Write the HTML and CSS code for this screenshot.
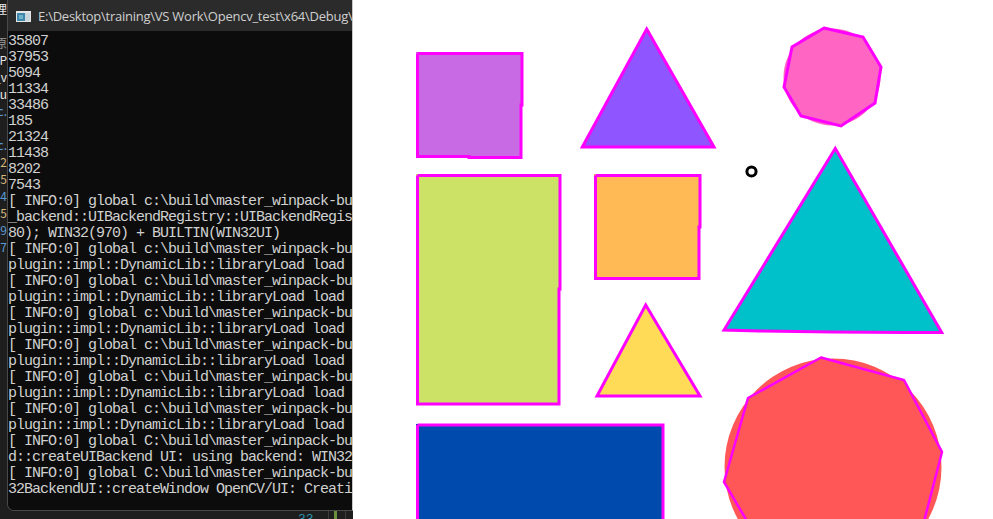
FILE: index.html
```html
<!DOCTYPE html>
<html lang="en">
<head>
<meta charset="utf-8">
<title>OpenCV shapes</title>
<link rel="stylesheet" href="styles.css">
</head>
<body>
<div class="screen">
  <div class="desk">
    <div class="desk-top">
      <pre class="editor-strip"><span class="w">理</span>

<span class="g">原</span>
<span class="w">PP</span>
<span class="w">v_</span>
<span class="w">u</span>
<span class="b">.c</span>

<span class="b">.c</span>
<span class="o">2.</span>
<span class="o">5.c</span>
<span class="b">4.c</span>
<span class="o">5.c</span>
<span class="b">9.c</span>
<span class="b">7.c</span></pre>
      <div class="console">
        <div class="titlebar">
          <svg class="app-icon" width="15" height="11" viewBox="0 0 15 11">
            <rect x="0" y="0" width="15" height="11" fill="#e6e6e6"/>
            <rect x="1" y="2" width="8" height="8" fill="#3f86ad"/>
            <rect x="3" y="4" width="4" height="4" fill="#6fb3c9"/>
            <rect x="9" y="2" width="5" height="8" fill="#c9d6dc"/>
          </svg>
          <span class="title">E:\Desktop\training\VS Work\Opencv_test\x64\Debug\Opencv_test.exe</span>
        </div>
        <pre class="console-body">35807
37953
5094
11334
33486
185
21324
11438
8202
7543
[ INFO:0] global c:\build\master_winpack-build-win64-vc15\opencv\modules\highgui\src\registry.impl.hpp
_backend::UIBackendRegistry::UIBackendRegistry UI: Enabled backends(3, sorted by priority): GTK(1000)
80); WIN32(970) + BUILTIN(WIN32UI)
[ INFO:0] global c:\build\master_winpack-build-win64-vc15\opencv\modules\core\src\utils\plugin_loader
plugin::impl::DynamicLib::libraryLoad load libopencv_highgui_gtk.dll =&gt; FAILED
[ INFO:0] global c:\build\master_winpack-build-win64-vc15\opencv\modules\core\src\utils\plugin_loader
plugin::impl::DynamicLib::libraryLoad load opencv_highgui_gtk.dll =&gt; FAILED
[ INFO:0] global c:\build\master_winpack-build-win64-vc15\opencv\modules\core\src\utils\plugin_loader
plugin::impl::DynamicLib::libraryLoad load libopencv_highgui_gtk3.dll =&gt; FAILED
[ INFO:0] global c:\build\master_winpack-build-win64-vc15\opencv\modules\core\src\utils\plugin_loader
plugin::impl::DynamicLib::libraryLoad load opencv_highgui_gtk3.dll =&gt; FAILED
[ INFO:0] global c:\build\master_winpack-build-win64-vc15\opencv\modules\core\src\utils\plugin_loader
plugin::impl::DynamicLib::libraryLoad load libopencv_highgui_gtk2.dll =&gt; FAILED
[ INFO:0] global c:\build\master_winpack-build-win64-vc15\opencv\modules\core\src\utils\plugin_loader
plugin::impl::DynamicLib::libraryLoad load opencv_highgui_gtk2.dll =&gt; FAILED
[ INFO:0] global C:\build\master_winpack-build-win64-vc15\opencv\modules\highgui\src\backend.cpp (90)
d::createUIBackend UI: using backend: WIN32 (priority=970)
[ INFO:0] global C:\build\master_winpack-build-win64-vc15\opencv\modules\highgui\src\window_w32.cpp
32BackendUI::createWindow OpenCV/UI: Creating Win32UI window: 1 (1)</pre>
      </div>
    </div>
    <div class="desk-bottom">
      <span class="ln">33</span>
      <span class="vline"></span>
      <span class="gbar"></span>
      <span class="vline2"></span>
    </div>
  </div>
  <div class="canvas">
    <svg width="640" height="519" viewBox="353 0 640 519">
      <g class="outline">
        <!-- purple square -->
        <rect x="416" y="52" width="106" height="106" fill="#c86ae4" stroke="none"/>
        <polyline points="417.5,53.5 522,53.5 522,105 521,105 521,157.5 469,157.5 469,156.5 417.5,156.5 417.5,53.5"/>
        <!-- violet triangle -->
        <polygon points="646.7,29 714,147 582.3,147" fill="#8f55ff"/>
        <!-- pink octagon -->
        <circle cx="832" cy="77" r="48.5" fill="#ff66c4" stroke="none"/>
        <polygon points="824,28 863,37 881,67 875,103 841,126 801,116 784,87 792,47" fill="#ff66c4"/>
        <!-- green rect -->
        <rect x="416" y="174" width="144" height="231" fill="#cbe266" stroke="none"/>
        <polyline points="417.5,175.5 560,175.5 560,289 559,289 559,404 417.5,404 417.5,175.5"/>
        <!-- orange square -->
        <rect x="594" y="174" width="106" height="106" fill="#ffba55" stroke="none"/>
        <polyline points="595.5,175.5 700,175.5 700,227 699,227 699,278.5 595.5,278.5 595.5,175.5"/>
        <!-- yellow triangle -->
        <polygon points="645.7,305 700,396 597,396" fill="#ffdb58"/>
        <!-- cyan triangle -->
        <polygon points="835.3,148.5 941.7,332.5 906,332.5 833,332 760,331 724,330" fill="#00c0ca"/>
        <!-- blue rect -->
        <rect x="416" y="424" width="247" height="110" fill="#004aad" stroke="none"/>
        <polyline points="417.5,425 663,425 663,540 417.5,540 417.5,425"/>
        <!-- red octagon -->
        <circle cx="833" cy="467" r="108.5" fill="#ff5757" stroke="none"/>
        <polygon class="thin" points="821,357.5 904,380 942,452 921,533 848,576 767,555 724,482 748,398" fill="#ff5757"/>
      </g>
      <circle cx="751.5" cy="171.5" r="4.6" fill="#fff" stroke="#000" stroke-width="3"/>
    </svg>
  </div>
</div>
</body>
</html>
```

FILE: styles.css
```css
html, body {
  margin: 0;
  padding: 0;
  background: #1e1e1e;
}

.screen {
  display: flex;
  width: 993px;
  height: 519px;
  overflow: hidden;
}

.desk {
  width: 353px;
  flex: none;
  display: flex;
  flex-direction: column;
  background: #1e1e1e;
}

.desk-top {
  display: flex;
  height: 511px;
}

.editor-strip {
  width: 7px;
  margin: 0;
  padding-top: 0;
  overflow: hidden;
  font-family: "Noto Sans CJK SC", "Liberation Mono", monospace;
  font-size: 12px;
  line-height: 17px;
  direction: rtl;
  text-align: left;
  color: #bbbbbb;
  background: #1e1e1e;
}

.editor-strip .w { color: #e6e6e6; }
.editor-strip .g { color: #9a9a9a; }
.editor-strip .b { color: #5b9bd5; }
.editor-strip .o { color: #d7ba7d; }

.console {
  width: 344px;
  display: flex;
  flex-direction: column;
  border-left: 1px solid #4a4a4a;
  border-right: 1px solid #c9c9c9;
  border-bottom: 1px solid #4a4a4a;
  border-bottom-left-radius: 7px;
  overflow: hidden;
  background: #0c0c0c;
}

.titlebar {
  height: 31px;
  flex: none;
  display: flex;
  align-items: center;
  gap: 7px;
  padding-left: 8px;
  background: #2b2b2b;
  overflow: hidden;
  white-space: nowrap;
}

.app-icon {
  flex: none;
  margin-top: 1px;
}

.title {
  font-family: "Open Sans", "Noto Sans", sans-serif;
  font-size: 13px;
  color: #cfcfcf;
  letter-spacing: -0.25px;
}

.console-body {
  flex: 1;
  margin: 0;
  padding: 3px 0 0 0;
  overflow: hidden;
  white-space: pre;
  font-family: "Liberation Mono", "DejaVu Sans Mono", monospace;
  font-size: 15px;
  letter-spacing: -1px;
  line-height: 16px;
  color: #d0d0d0;
  background: #0c0c0c;
}

.desk-bottom {
  flex: 1;
  display: flex;
  align-items: flex-start;
  background: #1e1e1e;
  padding-left: 298px;
  gap: 0;
  overflow: hidden;
}

.desk-bottom .ln {
  font-family: "Liberation Mono", monospace;
  font-size: 13px;
  line-height: 13px;
  margin-top: 2px;
  color: #2b91af;
  width: 30px;
}

.desk-bottom .vline {
  width: 1px;
  height: 8px;
  background: #3c3c3c;
  margin-right: 5px;
}

.desk-bottom .gbar {
  width: 3px;
  height: 8px;
  background: #6a8f3b;
  margin-right: 8px;
}

.desk-bottom .vline2 {
  width: 1px;
  height: 8px;
  background: #3c3c3c;
}

.canvas {
  flex: 1;
  background: #ffffff;
  overflow: hidden;
}

.canvas svg {
  display: block;
}

.outline polygon,
.outline polyline {
  stroke: #ff00ff;
  stroke-width: 3;
  stroke-linejoin: miter;
}

.outline polyline {
  fill: none;
}

.outline polygon.thin {
  stroke-width: 2.5;
}
```
